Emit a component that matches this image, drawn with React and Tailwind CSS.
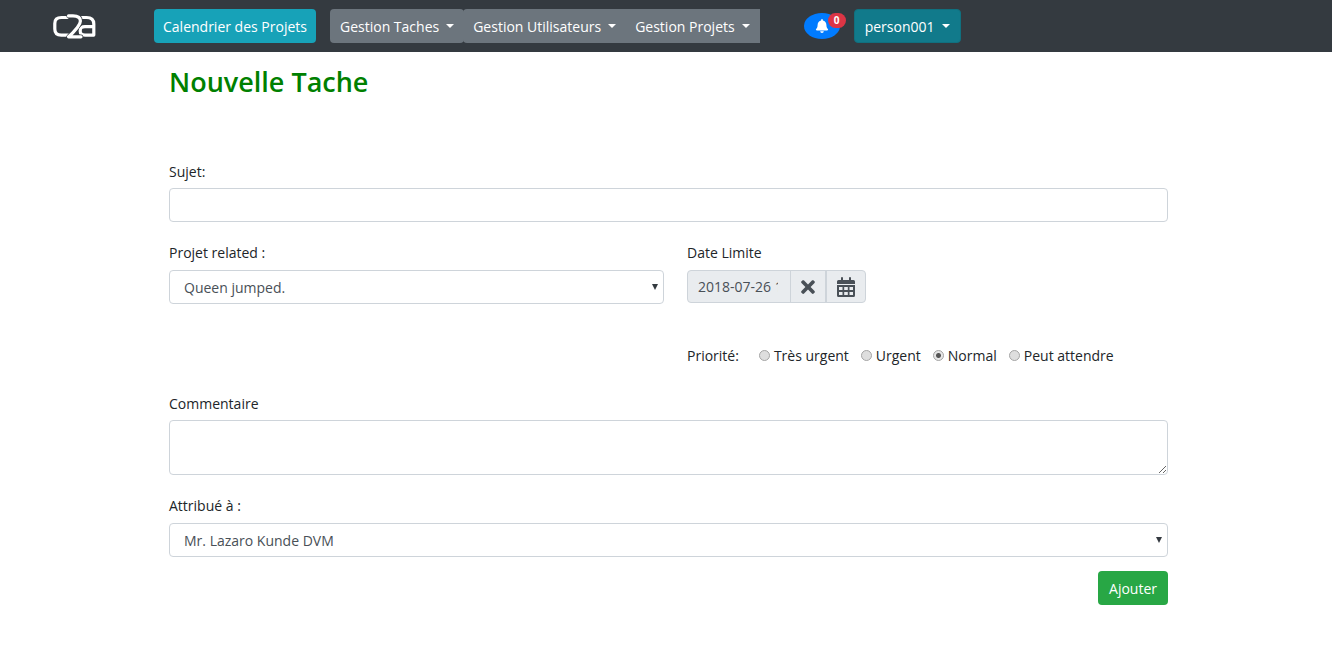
import { FaBell, FaTimes } from "react-icons/fa";

const control = "block w-full rounded-[4px] border border-[#ced4da] bg-white text-[#495057]";
const groupButton = "flex h-[34px] items-center bg-[#6c757d] px-[10px]";

function Caret() {
  return <span className="ml-[7px] h-0 w-0 border-x-4 border-t-4 border-x-transparent border-t-white" />;
}

function Logo() {
  return (
    <svg viewBox="0 0 44 28" className="h-[28px] w-[44px]" fill="none" stroke="#fff" strokeWidth="3.2" strokeLinejoin="round" strokeLinecap="round" role="img" aria-label="c2a">
      <path d="M15 5.500H9.500C4.800 5.500 2.800 7.600 2.800 11.500v5.500c0 4 2 6.100 6.500 6.100h7" />
      <path d="M30 5.500h4.500c5 0 7.300 2 7.300 6.500v11.100H33c-3.400 0-4.800-1.400-4.800-4.200 0-2.900 1.500-4.300 4.800-4.300h8.500" />
      <path d="M16.500 3.800H21c5 0 7.400 1.700 7.400 5.200 0 2.300-1 3.900-2.900 6.200-2 2.500-4.500 6-9 9.600H29" stroke="#343a40" strokeWidth="4.400" />
      <path d="M16.500 3.800H21c5 0 7.400 1.700 7.400 5.200 0 2.300-1 3.900-2.900 6.200-2 2.500-4.500 6-9 9.600H29" />
    </svg>
  );
}

function CalendarIcon() {
  return (
    <svg viewBox="0 0 18 20" className="h-[20px] w-[18px]" fill="currentColor" aria-hidden="true">
      <path d="M4 1a1 1 0 0 1 2 0v2h6V1a1 1 0 0 1 2 0v2h2.500A1.500 1.500 0 0 1 18 4.500V7H0V4.500A1.500 1.500 0 0 1 1.500 3H4z" />
      <path fillRule="evenodd" d="M0 8h18v10.500a1.500 1.500 0 0 1-1.500 1.500h-15A1.500 1.500 0 0 1 0 18.500zM2 10v3h3.500v-3zM7.200 10v3h3.600v-3zM12.500 10v3H16v-3zM2 15v3h3.500v-3zM7.200 15v3h3.600v-3zM12.500 15v3H16v-3z" />
    </svg>
  );
}

function SelectField({ id, label, value }) {
  return (
    <div>
      <label htmlFor={id} className="mb-[7px] block">{label}</label>
      <div className="relative">
        <select id={id} className={control + " h-[34px] appearance-none px-[14px]"} defaultValue={value}>
          <option>{value}</option>
        </select>
        <svg viewBox="0 0 6 6" className="pointer-events-none absolute top-[14px] right-[6px] h-[6px] w-[6px]" fill="#343a40" aria-hidden="true">
          <path d="M0 0h6L3 6z" />
        </svg>
      </div>
    </div>
  );
}

const priorities = ["Très urgent", "Urgent", "Normal", "Peut attendre"];

export default function App() {
  return (
    <div className="bg-white font-['Open_Sans','Noto_Sans',sans-serif] text-[14px] leading-[21px] text-[#212529]">
      <nav className="flex h-[52px] items-center bg-[#343a40] pl-[52px] text-white">
        <a href="#" className="mr-[58px]"><Logo /></a>
        <button className="mr-[14px] h-[34px] rounded-[4px] bg-[#17a2b8] px-[9px]">Calendrier des Projets</button>
        <div className="mr-[44px] flex">
          <button className={groupButton + " rounded-[4px]"}>Gestion Taches<Caret /></button>
          <button className={groupButton + " -ml-px rounded-l-[4px]"}>Gestion Utilisateurs<Caret /></button>
          <button className={groupButton + " -ml-px"}>Gestion Projets<Caret /></button>
        </div>
        <button aria-label="Notifications" className="relative mr-[14px] flex h-[26px] w-[36px] items-center justify-center rounded-[50%] bg-[#007bff]">
          <FaBell className="h-[14px] w-[14px]" />
          <span className="absolute top-0 -right-[6px] h-[15px] w-[18px] rounded-full bg-[#dc3545] text-center text-[10px] leading-[15px] font-bold">0</span>
        </button>
        <button className="flex h-[34px] items-center rounded-[4px] border border-[#10707f] bg-[#117a8b] px-[10px]">person001<Caret /></button>
      </nav>
      <main className="pt-[13px] pr-[164px] pl-[169px]">
        <h1 className="mb-[62px] text-[27px] leading-[34px] font-semibold text-[#008000]">Nouvelle Tache</h1>
        <form>
          <label htmlFor="subject" className="mb-[6px] block">Sujet:</label>
          <input id="subject" type="text" className={control + " h-[34px] px-[10px]"} />
          <div className="mt-[20px] grid grid-cols-[495fr_481fr] gap-x-[23px]">
            <SelectField id="project" label="Projet related :" value="Queen jumped." />
            <div>
              <label htmlFor="deadline" className="mb-[7px] block">Date Limite</label>
              <div className="flex h-[33px] w-[179px] overflow-hidden rounded-[4px] border border-[#ced4da] bg-[#e9ecef] text-[#495057]">
                <input id="deadline" type="text" readOnly defaultValue="2018-07-26 14:30" className="w-[102px] pr-[12px] pl-[10px]" />
                <button type="button" aria-label="Effacer" className="flex w-[35px] items-center justify-center border-l border-[#ced4da]"><FaTimes className="h-[20px] w-[20px]" /></button>
                <button type="button" aria-label="Choisir une date" className="flex flex-1 items-center justify-center border-l-2 border-[#ced4da]"><CalendarIcon /></button>
              </div>
              <fieldset className="mt-[42px] flex items-center">
                <legend className="float-left mr-[20px]">Priorité:</legend>
                {priorities.map((name) => (
                  <label key={name} className="mr-[12px] flex items-center gap-[4px] whitespace-nowrap">
                    <input type="radio" name="priority" defaultChecked={name === "Normal"} className="h-[11px] w-[11px] appearance-none rounded-full border border-[#a5a5a5] bg-[#dedede] checked:bg-[radial-gradient(circle,#555_0_2px,#e6e6e6_3px)]" />
                    {name}
                  </label>
                ))}
              </fieldset>
            </div>
          </div>
          <label htmlFor="comment" className="mt-[27px] mb-[6px] block">Commentaire</label>
          <textarea id="comment" className={control + " mb-[20px] h-[55px] px-[10px] py-[5px]"} />
          <SelectField id="assignee" label="Attribué à :" value="Mr. Lazaro Kunde DVM" />
          <div className="mt-[14px] flex justify-end">
            <button type="submit" className="h-[34px] rounded-[4px] bg-[#28a745] px-[11px] text-white">Ajouter</button>
          </div>
        </form>
      </main>
    </div>
  );
}
